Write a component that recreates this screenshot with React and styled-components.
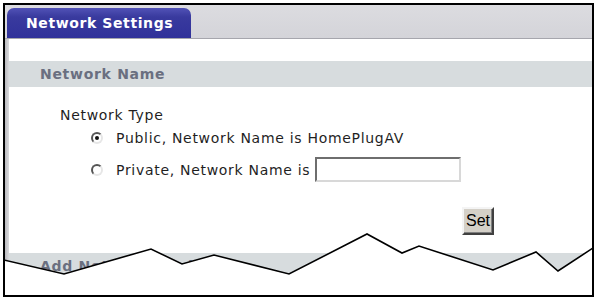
import styled, { createGlobalStyle } from "styled-components";

const GlobalStyle = createGlobalStyle`
  html, body {
    margin: 0;
    padding: 0;
    background: #ffffff;
  }
  body {
    font-family: "DejaVu Sans", Verdana, sans-serif;
  }
`;

const Frame = styled.div`
  position: relative;
  margin: 3px 0 0 3px;
  width: 587px;
  height: 290px;
  border: 2px solid #000;
  background: #fff;
  overflow: hidden;
  display: flex;
  flex-direction: column;
`;

const TabBar = styled.div`
  height: 33px;
  padding-left: 2px;
  background: linear-gradient(#dcdce0, #d4d4d9);
  border-bottom: 1px solid #a6a6ad;
  display: flex;
  align-items: flex-end;
`;

const Tab = styled.div`
  width: 184px;
  height: 30px;
  box-sizing: border-box;
  padding-left: 19px;
  border-radius: 7px 7px 0 0;
  background: linear-gradient(#5152b6, #393a9e 30%, #30319a);
  color: #fff;
  font-weight: bold;
  font-size: 14px;
  letter-spacing: 0.6px;
  display: flex;
  align-items: center;
`;

const Body = styled.div`
  flex: 1;
  display: flex;
`;

const Strip = styled.div`
  width: 4px;
  background: linear-gradient(90deg, #b9b9bd, #d9d9dc);
`;

const Main = styled.div`
  flex: 1;
  padding-top: 22px;
  display: flex;
  flex-direction: column;
`;

const SectionHeader = styled.div`
  height: 26px;
  padding-left: 31px;
  background: #d7dcde;
  color: #6a6f80;
  font-weight: bold;
  font-size: 14px;
  letter-spacing: 0.7px;
  display: flex;
  align-items: center;
`;

const Content = styled.div`
  padding: 20px 0 0 51px;
  color: #1f1f1f;
  font-size: 14px;
  letter-spacing: 0.7px;
  display: flex;
  flex-direction: column;
`;

const Label = styled.div`
  line-height: 16px;
`;

const OptionRow = styled.div`
  display: flex;
  align-items: center;
  padding-left: 32px;
  margin-top: ${(p) => p.$gap}px;
  height: ${(p) => p.$h}px;
`;

const Radio = styled.span`
  width: 12px;
  height: 12px;
  box-sizing: border-box;
  border-radius: 50%;
  border: 2px solid;
  border-color: #555 #e6e6e6 #e6e6e6 #555;
  background: #fff;
  margin-left: -1px;
  margin-right: 13px;
  display: flex;
  align-items: center;
  justify-content: center;
  &::after {
    content: "";
    width: 4px;
    height: 4px;
    border-radius: 50%;
    background: ${(p) => (p.$checked ? "#111" : "transparent")};
  }
`;

const TextInput = styled.input`
  width: 146px;
  height: 25px;
  box-sizing: border-box;
  margin-left: 5px;
  border: 2px solid;
  border-color: #6e6e6e #d8d8d8 #d8d8d8 #6e6e6e;
  background: #fff;
  outline: none;
`;

const ButtonRow = styled.div`
  margin-top: 25px;
  padding-left: 453px;
`;

const SetButton = styled.button`
  width: 32px;
  height: 28px;
  padding: 0;
  background: #d4d0c8;
  border: 2px solid;
  border-color: #f4f4f4 #404040 #404040 #f4f4f4;
  box-shadow: inset -1px -1px 0 #808080;
  font-family: "Liberation Sans", Arial, sans-serif;
  font-size: 16px;
  color: #000;
`;

const NextSection = styled(SectionHeader)`
  margin-top: 18px;
`;

const Tear = styled.svg`
  position: absolute;
  left: -2px;
  top: -2px;
  width: 591px;
  height: 294px;
`;

const tearLine =
  "4,260 64,274 151,249 182,264 214,255 289,274 367,234 402,253 419,246 493,270 536,252 558,271 593,248";

const tearFill =
  "5,260 64,274 151,249 182,264 214,255 289,274 367,234 402,253 419,246 493,270 536,252 558,271 592,249 592,295 5,295";

export default function App() {
  return (
    <>
      <GlobalStyle />
      <Frame>
        <TabBar>
          <Tab>Network Settings</Tab>
        </TabBar>
        <Body>
          <Strip />
          <Main>
            <SectionHeader>Network Name</SectionHeader>
            <Content>
              <Label>Network Type</Label>
              <OptionRow $gap={7} $h={16}>
                <Radio $checked />
                Public, Network Name is HomePlugAV
              </OptionRow>
              <OptionRow $gap={11} $h={25}>
                <Radio />
                Private, Network Name is
                <TextInput type="text" />
              </OptionRow>
            </Content>
            <ButtonRow>
              <SetButton>Set</SetButton>
            </ButtonRow>
            <NextSection>Add Network Device</NextSection>
          </Main>
        </Body>
        <Tear viewBox="3 3 591 294">
          <polygon points={tearFill} fill="#fff" />
          <polyline points={tearLine} fill="none" stroke="#000" strokeWidth="1.6" />
        </Tear>
      </Frame>
    </>
  );
}
